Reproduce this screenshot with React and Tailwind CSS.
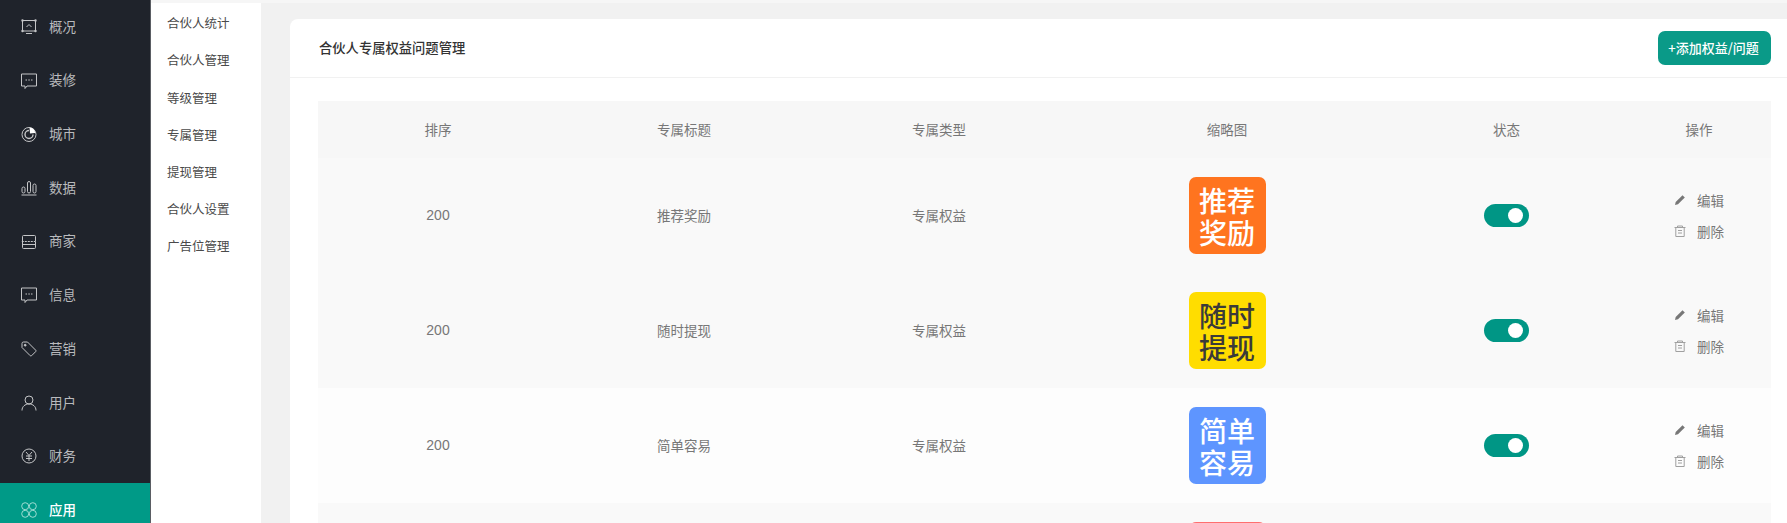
import React from 'react';

const CJK = '"Noto Sans CJK SC", "Noto Sans", sans-serif';

const Stroke = ({ children }) => (
  <svg viewBox="0 0 16 16" fill="none" stroke="currentColor" strokeWidth="1" className="w-[16px] h-[16px] shrink-0">
    {children}
  </svg>
);

const icons = {
  overview: (
    <Stroke>
      <path d="M1.500 1.500h13v10.500h-13z" />
      <path d="M5.500 8l2.500-2.500L10.500 8M5 14.500h6" />
      <path d="M1.500 1.500h.01M14.500 1.500h.01M1.500 12h.01M14.500 12h.01" strokeWidth="2.400" strokeLinecap="round" />
    </Stroke>
  ),
  chat: (
    <Stroke>
      <path d="M.5 1h15v12H6l-2 2.500V13H.5z" />
      <path d="M4.500 7h1.500M7.300 7h1.500M10 7h1.500" />
    </Stroke>
  ),
  city: (
    <Stroke>
      <circle cx="8" cy="8.500" r="7" />
      <path d="M8 4.500a4 4 0 1 0 4 4" strokeWidth="1.400" />
      <path d="M8.500 1.500a6.500 6.500 0 0 1 5.800 5.500L9 7.500z" fill="#ffffff" stroke="none" />
    </Stroke>
  ),
  data: (
    <Stroke>
      <rect x="1" y="7" width="3" height="6" rx="1.500" />
      <rect x="6.500" y="1.500" width="3" height="11.500" rx="1.500" />
      <rect x="12" y="4" width="3" height="9" rx="1.500" />
      <path d="M0.500 15h15" />
    </Stroke>
  ),
  shop: (
    <Stroke>
      <path d="M1.500 7V2.500a1 1 0 0 1 1-1h11a1 1 0 0 1 1 1V7" />
      <path d="M.8 7.500h14.400" strokeDasharray="2 1" />
      <path d="M1.500 8v5.500a1 1 0 0 0 1 1h11a1 1 0 0 0 1-1V8M1.500 10.500h13" />
    </Stroke>
  ),
  tag: (
    <Stroke>
      <path d="M1 2.500A1.500 1.500 0 0 1 2.500 1h4l8.200 8.200a1 1 0 0 1 0 1.400l-4.100 4.100a1 1 0 0 1-1.400 0L1 6.500z" />
      <circle cx="4.200" cy="4.200" r="0.900" fill="currentColor" />
    </Stroke>
  ),
  user: (
    <Stroke>
      <circle cx="8" cy="5" r="4" />
      <path d="M1 15.500c0-4 3-6.500 7-6.500s7 2.500 7 6.500" />
    </Stroke>
  ),
  money: (
    <Stroke>
      <circle cx="8" cy="8" r="7" />
      <path d="M5 4l3 3.500L11 4M5 8h6M5 10.500h6M8 7.500V13" />
    </Stroke>
  ),
  apps: (
    <Stroke>
      <circle cx="4.200" cy="4.200" r="3.500" />
      <circle cx="11.800" cy="4.200" r="3.500" />
      <circle cx="4.200" cy="11.800" r="3.500" />
      <circle cx="11.800" cy="11.800" r="3.500" />
    </Stroke>
  ),
};

const mainNav = [
  { label: '概况', icon: 'overview' },
  { label: '装修', icon: 'chat' },
  { label: '城市', icon: 'city' },
  { label: '数据', icon: 'data' },
  { label: '商家', icon: 'shop' },
  { label: '信息', icon: 'chat' },
  { label: '营销', icon: 'tag' },
  { label: '用户', icon: 'user' },
  { label: '财务', icon: 'money' },
  { label: '应用', icon: 'apps', active: true },
];

const subNav = ['合伙人统计', '合伙人管理', '等级管理', '专属管理', '提现管理', '合伙人设置', '广告位管理'];

const rows = [
  { title: '推荐奖励', thumb: ['推荐', '奖励'], color: 'bg-[#ff741f] text-white', bg: 'bg-[#f9f9f9]' },
  { title: '随时提现', thumb: ['随时', '提现'], color: 'bg-[#ffdd00] text-[#3a3a3a]', bg: 'bg-[#f9f9f9]' },
  { title: '简单容易', thumb: ['简单', '容易'], color: 'bg-[#5e95ff] text-white', bg: 'bg-[#fdfdfd]' },
];

const columns = 'grid grid-cols-[240px_252px_258px_318px_241px_144px] items-center text-center';

const Pencil = () => (
  <svg viewBox="0 0 12 12" className="w-[12px] h-[12px] fill-[#777]">
    <path d="M1 11l.7-3L8.500 1.200l2.300 2.300L4 10.300z" />
  </svg>
);

const Trash = () => (
  <svg viewBox="0 0 12 12" fill="none" stroke="#a0a0a0" strokeWidth="1" className="w-[12px] h-[12px]">
    <path d="M.5 2.500h11M3.500 2.500V1h5v1.500M1.800 2.500v9h8.400v-9M4 5.500h4M4 8h4" />
  </svg>
);

export default function App() {
  return (
    <div className="flex h-[523px] overflow-hidden bg-[#f1f1f1]" style={{ fontFamily: CJK }}>
      {/* main menu */}
      <div className="w-[151px] shrink-0 bg-[#1f232b] border-r border-[#5a5d63]">
        {mainNav.map((item) => (
          <div
            key={item.label}
            className={`flex items-center h-[53.7px] pl-[21px] gap-[12px] text-[13.5px] ${
              item.active ? 'bg-[#009a87] text-white font-medium' : 'text-[#b9babd]'
            }`}
          >
            <span className={item.active ? 'text-[#9fdcd2]' : 'text-[#c4c5c7]'}>{icons[item.icon]}</span>
            <span className="pb-[2px]">{item.label}</span>
          </div>
        ))}
      </div>

      {/* sub menu */}
      <div className="w-[110px] shrink-0">
        <div className="h-[3px] bg-[#f6f6f6]" />
        <div className="h-full bg-white pl-[16px] pt-[2px] text-[12.5px] text-[#4a4a4a]">
          {subNav.map((label) => (
            <div key={label} className="h-[37.2px] flex items-center">
              {label}
            </div>
          ))}
        </div>
      </div>

      {/* content */}
      <div className="flex-1 min-w-0">
        <div className="h-[3px] bg-[#f6f6f6]" />
        <div className="pl-[29px] pt-[16px]">
          <div className="bg-white rounded-tl-[8px] h-[600px]">
            <div className="h-[59px] pl-[29px] pr-[16px] border-b border-[#f1f1f1] flex items-center justify-between">
              <span className="text-[13.3px] font-medium text-[#333]">合伙人专属权益问题管理</span>
              <button className="w-[113px] h-[34px] rounded-[7px] bg-[#0a9a88] text-white text-[13px] font-medium pr-[2px]">
                +添加权益/问题
              </button>
            </div>

            <div className="pl-[28px] pr-[16px] pt-[23px] text-[13.5px] text-[#777]">
              <div className={`${columns} h-[57px] bg-[#f7f7f7]`}>
                <span>排序</span>
                <span>专属标题</span>
                <span>专属类型</span>
                <span>缩略图</span>
                <span>状态</span>
                <span>操作</span>
              </div>

              {rows.map((row) => (
                <div key={row.title} className={`${columns} h-[115px] ${row.bg}`}>
                  <span className="font-['Liberation_Sans',sans-serif] text-[14px]">200</span>
                  <span>{row.title}</span>
                  <span>专属权益</span>
                  <div className="flex justify-center">
                    <div
                      className={`w-[77px] h-[77px] rounded-[7px] flex items-center justify-center text-center text-[28px] leading-[32px] font-medium ${row.color}`}
                    >
                      <p>
                        {row.thumb[0]}
                        <br />
                        {row.thumb[1]}
                      </p>
                    </div>
                  </div>
                  <div className="flex justify-center">
                    <div className="w-[45px] h-[23px] rounded-full bg-[#009685] flex items-center justify-end pr-[6px]">
                      <div className="w-[15px] h-[15px] rounded-full bg-white" />
                    </div>
                  </div>
                  <div className="flex flex-col gap-[10px] pl-[47px] text-[13.5px]">
                    <div className="flex items-center gap-[11px]">
                      <Pencil />
                      <span>编辑</span>
                    </div>
                    <div className="flex items-center gap-[11px]">
                      <Trash />
                      <span>删除</span>
                    </div>
                  </div>
                </div>
              ))}

              {/* next row, only the top edge of its picture is on screen */}
              <div className={`${columns} h-[115px] bg-[#f9f9f9] items-start pt-[19px]`}>
                <div className="col-start-4 flex justify-center">
                  <div className="w-[77px] h-[77px] rounded-[7px] bg-[#ff6f6f]" />
                </div>
              </div>
            </div>
          </div>
        </div>
      </div>
    </div>
  );
}
